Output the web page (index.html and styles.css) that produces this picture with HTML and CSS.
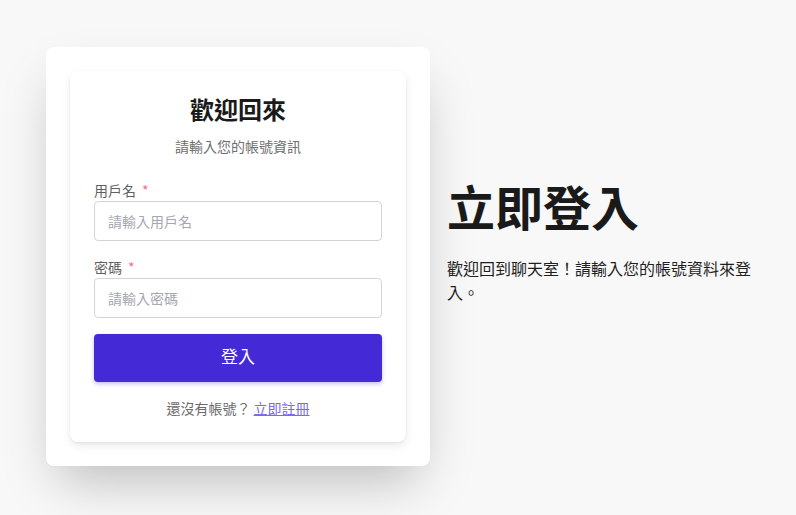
FILE: index.html
```html
<!DOCTYPE html>
<html lang="zh-Hant">
<head>
<meta charset="utf-8">
<title>登入</title>
<link rel="stylesheet" href="styles.css">
</head>
<body>
<main class="page">
  <section class="outer-card">
    <div class="login-card">
      <div class="login-header">
        <h2 class="login-title">歡迎回來</h2>
        <p class="login-subtitle">請輸入您的帳號資訊</p>
      </div>
      <form class="login-form">
        <div class="form-item">
          <label class="form-label">用戶名<span class="required">*</span></label>
          <input class="form-input" type="text" placeholder="請輸入用戶名">
        </div>
        <div class="form-item">
          <label class="form-label">密碼<span class="required">*</span></label>
          <input class="form-input" type="password" placeholder="請輸入密碼">
        </div>
        <button class="login-button" type="button">登入</button>
      </form>
      <p class="register-row">還沒有帳號？ <a class="register-link" href="#">立即註冊</a></p>
    </div>
  </section>
  <section class="intro">
    <h1 class="intro-title">立即登入</h1>
    <p class="intro-text">歡迎回到聊天室！請輸入您的帳號資料來登入。</p>
  </section>
</main>
</body>
</html>
```

FILE: styles.css
```css
* { box-sizing: border-box; }

html, body {
  margin: 0;
  padding: 0;
  height: 100%;
}

body {
  background: #f8f8f8;
  font-family: "Noto Sans CJK TC", "Noto Sans", sans-serif;
  color: #1f1f1f;
}

.page {
  display: flex;
  align-items: center;
  gap: 17px;
  height: 515px;
  padding: 0 36px 0 46px;
}

.outer-card {
  flex: 0 0 384px;
  background: #ffffff;
  border-radius: 8px;
  padding: 24px;
  margin-top: -2px;
  box-shadow: 0 25px 50px -12px rgba(0, 0, 0, 0.25);
}

.login-card {
  background: #ffffff;
  border-radius: 8px;
  padding: 24px;
  box-shadow: 0 4px 10px rgba(0, 0, 0, 0.08), 0 1px 3px rgba(0, 0, 0, 0.06);
}

.login-header {
  text-align: center;
  margin-bottom: 24px;
}

.login-title {
  margin: 0 0 13px;
  font-size: 24px;
  line-height: 28px;
  font-weight: 700;
  color: #1a1a1a;
}

.login-subtitle {
  margin: 0;
  font-size: 14px;
  line-height: 20px;
  color: #6e6e6e;
}

.login-form {
  display: flex;
  flex-direction: column;
}

.form-item {
  display: flex;
  flex-direction: column;
  margin-bottom: 16px;
}

.form-label {
  font-size: 14px;
  line-height: 20px;
  color: #5f5f5f;
  margin-bottom: 1px;
}

.required {
  color: #f56c8a;
  margin-left: 6px;
}

.form-input {
  height: 40px;
  border: 1px solid #d4d4d8;
  border-radius: 4px;
  padding: 0 13px;
  font-family: inherit;
  font-size: 14px;
  color: #333;
  background: #fff;
  outline: none;
}

.form-input::placeholder {
  color: #a5a8b0;
}

.login-button {
  height: 48px;
  border: none;
  border-radius: 4px;
  background: #4429d6;
  color: #ffffff;
  font-family: inherit;
  font-size: 17px;
  padding: 0 0 5px;
  box-shadow: 0 2px 4px rgba(68, 41, 214, 0.3);
  cursor: pointer;
}

.register-row {
  margin: 16px 0 0;
  text-align: center;
  font-size: 14px;
  line-height: 20px;
  color: #6b6b6b;
}

.register-link {
  color: #7b68ee;
  text-decoration: underline;
}

.intro {
  flex: 1;
  margin-bottom: 30px;
}

.intro-title {
  margin: 0 0 27px;
  font-size: 48px;
  line-height: 48px;
  font-weight: 700;
  color: #1a1a1a;
}

.intro-text {
  margin: 0;
  font-size: 16px;
  line-height: 24px;
  color: #1f1f1f;
}
```
